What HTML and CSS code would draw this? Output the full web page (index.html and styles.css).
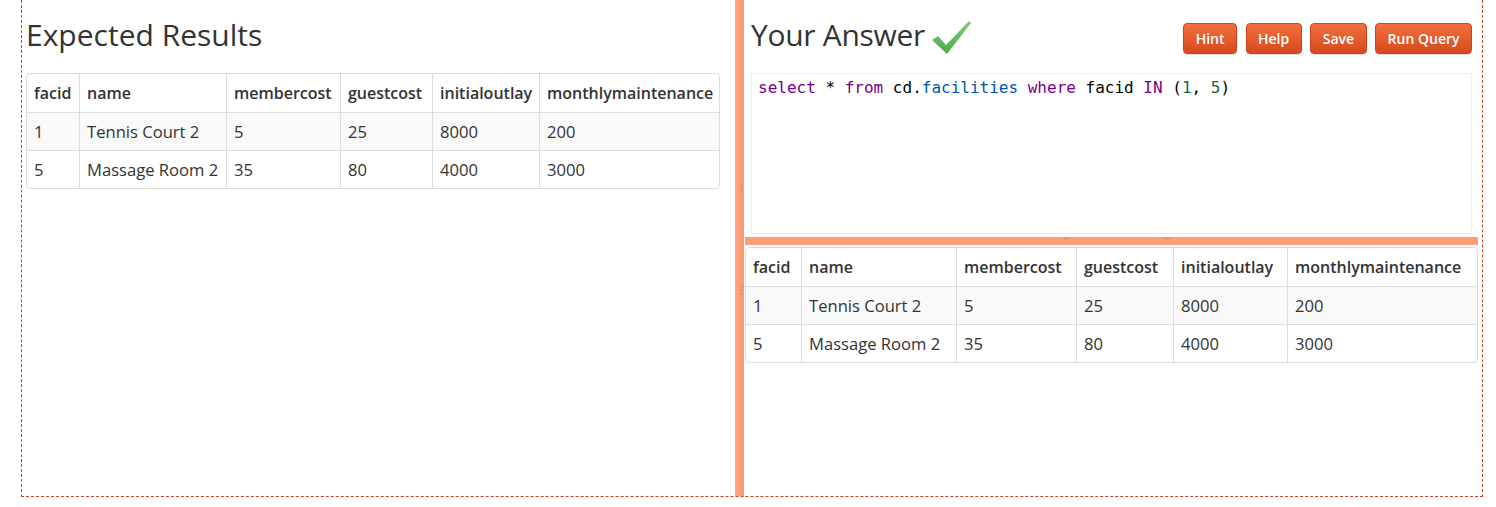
FILE: index.html
```
<!DOCTYPE html>
<html>
<head>
<meta charset="utf-8">
<link rel="stylesheet" href="styles.css">
</head>
<body>
<div class="frame">
  <div class="pane-left">
    <h2 class="title">Expected Results</h2>
    <table class="grid grid-left">
      <colgroup><col style="width:52px"><col style="width:147px"><col style="width:114px"><col style="width:92px"><col style="width:107px"><col></colgroup>
      <thead><tr><th>facid</th><th>name</th><th>membercost</th><th>guestcost</th><th>initialoutlay</th><th>monthlymaintenance</th></tr></thead>
      <tbody>
        <tr><td>1</td><td>Tennis Court 2</td><td>5</td><td>25</td><td>8000</td><td>200</td></tr>
        <tr><td>5</td><td>Massage Room 2</td><td>35</td><td>80</td><td>4000</td><td>3000</td></tr>
      </tbody>
    </table>
  </div>
  <div class="vsplit"><span class="grip g1">⋮</span><span class="grip g2">⋮</span></div>
  <div class="pane-right">
    <div class="top">
      <div class="head">
        <h2 class="title title-right">Your Answer
          <svg class="check" width="40" height="36" viewBox="0 0 40 36">
            <defs><linearGradient id="cg" x1="0" y1="0" x2="0" y2="1"><stop offset="0" stop-color="#7fcb78"/><stop offset="1" stop-color="#4faa4c"/></linearGradient></defs>
            <polygon points="0,20 6,16 14,25 37,1 39,3 15,34" fill="url(#cg)"/>
          </svg>
        </h2>
        <div class="buttons">
          <button class="btn">Hint</button>
          <button class="btn">Help</button>
          <button class="btn">Save</button>
          <button class="btn">Run Query</button>
        </div>
      </div>
      <div class="editor"><span class="kw">select</span> * <span class="kw">from</span> cd.<span class="v2">facilities</span> <span class="kw">where</span> facid <span class="kw">IN</span> (<span class="num">1</span>, <span class="num">5</span>)</div>
    </div>
    <div class="hsplit"><span class="hgrip h1">···</span><span class="hgrip h2">···</span></div>
    <table class="grid grid-right">
      <colgroup><col style="width:55px"><col style="width:155px"><col style="width:120px"><col style="width:97px"><col style="width:114px"><col></colgroup>
      <thead><tr><th>facid</th><th>name</th><th>membercost</th><th>guestcost</th><th>initialoutlay</th><th>monthlymaintenance</th></tr></thead>
      <tbody>
        <tr><td>1</td><td>Tennis Court 2</td><td>5</td><td>25</td><td>8000</td><td>200</td></tr>
        <tr><td>5</td><td>Massage Room 2</td><td>35</td><td>80</td><td>4000</td><td>3000</td></tr>
      </tbody>
    </table>
  </div>
</div>
</body>
</html>
```
FILE: styles.css
```
html, body { margin: 0; padding: 0; background: #fff; }
body { font-family: "Open Sans", "DejaVu Sans", sans-serif; color: #333; }
.frame {
  margin-left: 21px;
  width: 1460px;
  height: 496px;
  border-left: 1px dashed #c4461f;
  border-right: 1px dashed #c4461f;
  border-bottom: 1px dashed #c4461f;
  display: flex;
}
.pane-left { width: 709px; padding: 0 15px 0 4px; }
.title {
  margin: 0;
  padding-top: 15px;
  height: 40px;
  line-height: 40px;
  font-size: 30px;
  font-weight: 400;
  color: #333;
  letter-spacing: 0;
  display: flex;
  align-items: center;
}
.title-right { letter-spacing: -0.3px; }
.pane-left .title { margin-left: 0; margin-bottom: 18px; }
.check { margin-left: 7px; margin-top: 5px; }
.vsplit {
  width: 9px;
  background: linear-gradient(to right, #ffa585, #ff9670);
  position: relative;
  flex: none;
}
.grip { position: absolute; left: 2px; font-size: 9px; color: #d07050; line-height: 9px; }
.g1 { top: 183px; }
.g2 { top: 285px; }
.pane-right { flex: 1; padding: 0 4px 0 1px; display: flex; flex-direction: column; }
.top { padding: 0 6px 0 6px; }
.head { display: flex; justify-content: space-between; align-items: flex-start; margin-bottom: 18px; }
.buttons { display: flex; gap: 8.5px; padding-top: 23px; }
.btn {
  height: 31px;
  border: 1px solid #c9441a;
  border-radius: 4px;
  background: linear-gradient(to bottom, #f0703f, #d9491c);
  color: #fff;
  font-family: "Open Sans", sans-serif;
  font-size: 14px;
  font-weight: 600;
  padding: 0 11.5px;
  box-shadow: 0 1px 1px rgba(0,0,0,0.15);
}
.editor {
  height: 155px;
  border: 1px solid #eee;
  font-family: "DejaVu Sans Mono", monospace;
  font-size: 16px;
  line-height: 20px;
  padding: 4px 0 0 6px;
  color: #000;
  white-space: pre;
}
.kw { color: #708; }
.v2 { color: #05a; }
.num { color: #164; }
.hsplit {
  height: 8px;
  margin-top: 3px;
  margin-bottom: 2px;
  background: #ff9b77;
  position: relative;
}
.hgrip { position: absolute; top: -3px; font-size: 9px; color: #d07050; line-height: 9px; }
.h1 { left: 318px; }
.h2 { left: 418px; }
.grid {
  border-collapse: separate;
  border-spacing: 0;
  border: 1px solid #ddd;
  border-radius: 4px;
  table-layout: fixed;
  font-size: 16.6px;
}
.grid-left { width: 694px; }
.grid-right { width: 733px; }
.grid th, .grid td {
  text-align: left;
  padding: 8px 7px;
  line-height: 21px;
  border-left: 1px solid #ddd;
  white-space: nowrap;
  overflow: hidden;
}
.grid th { font-weight: 600; line-height: 22px; font-size: 16px; }
.grid th:first-child, .grid td:first-child { border-left: none; }
.grid td { border-top: 1px solid #ddd; }
.grid tbody tr:first-child td { background: #f9f9f9; }
```
